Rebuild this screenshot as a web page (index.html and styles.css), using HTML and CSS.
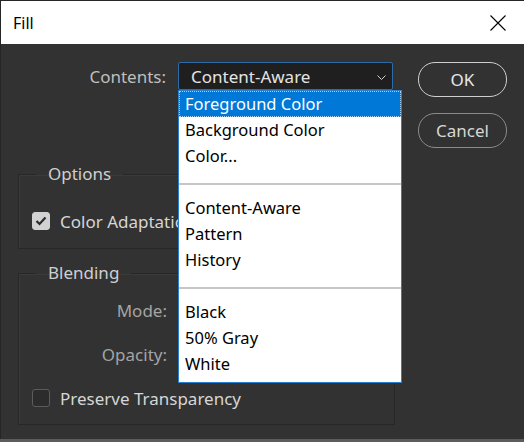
FILE: index.html
```html
<!DOCTYPE html>
<html lang="en">
<head>
  <meta charset="UTF-8" />
  <title>Fill</title>
  <link rel="stylesheet" href="styles.css">
</head>
<body>
  <div class="window">
    <div class="titlebar">
      <span class="title">Fill</span>
      <svg class="close" width="16" height="16" viewBox="0 0 16 16">
        <path d="M0.5 0.5 L15.5 15.5 M15.5 0.5 L0.5 15.5" stroke="#000" stroke-width="1.1" fill="none" />
      </svg>
    </div>

    <div class="dialog">
      <div class="main">
        <div class="contents-row">
          <label class="field-label">Contents:</label>
          <div class="select">
            <span>Content-Aware</span>
            <svg class="chevron" width="9" height="5" viewBox="0 0 9 5">
              <path d="M0.5 0.5 L4.5 4.5 L8.5 0.5" stroke="#cfcfcf" stroke-width="1" fill="none" />
            </svg>
          </div>

          <!-- open dropdown list -->
          <div class="dropdown">
            <div class="group">
              <div class="item selected">Foreground Color</div>
              <div class="item">Background Color</div>
              <div class="item">Color...</div>
            </div>
            <div class="separator"></div>
            <div class="group">
              <div class="item">Content-Aware</div>
              <div class="item">Pattern</div>
              <div class="item">History</div>
            </div>
            <div class="separator"></div>
            <div class="group last">
              <div class="item">Black</div>
              <div class="item">50% Gray</div>
              <div class="item">White</div>
            </div>
          </div>
        </div>

        <fieldset class="box options">
          <legend>Options</legend>
          <div class="check-row">
            <span class="checkbox checked">
              <svg width="12" height="10" viewBox="0 0 12 10">
                <path d="M1.5 5 L4.5 8 L10.5 1.5" stroke="#2b2b2b" stroke-width="2.2" fill="none" />
              </svg>
            </span>
            <span>Color Adaptation</span>
          </div>
        </fieldset>

        <fieldset class="box blending">
          <legend>Blending</legend>
          <div class="blend-row">
            <label class="field-label dim">Mode:</label>
          </div>
          <div class="blend-row">
            <label class="field-label dim">Opacity:</label>
          </div>
          <div class="check-row">
            <span class="checkbox"></span>
            <span>Preserve Transparency</span>
          </div>
        </fieldset>
      </div>

      <div class="buttons">
        <button class="btn primary">OK</button>
        <button class="btn">Cancel</button>
      </div>
    </div>
  </div>
</body>
</html>
```

FILE: styles.css
```css
body {
  margin: 0;
  padding: 0;
  background-color: #5f5b58;
  font-family: "Noto Sans", "Open Sans", sans-serif;
  font-size: 17px;
}

.window {
  height: 439px;
  display: flex;
  flex-direction: column;
  border-top: 1px solid #262626;
  border-left: 1px solid #262626;
  box-sizing: border-box;
  background-color: #323232;
}

.titlebar {
  height: 43px;
  flex-shrink: 0;
  display: flex;
  align-items: center;
  justify-content: space-between;
  padding: 0 18px 0 12px;
  background-color: #fff;
}

.title {
  font-size: 16px;
  color: #000;
}

.close {
  display: block;
}

.dialog {
  display: flex;
  gap: 23px;
  padding: 18px 0 0 17px;
}

.main {
  width: 377px;
}

.contents-row {
  position: relative;
  display: flex;
  align-items: center;
  gap: 12px;
  height: 28px;
}

.field-label {
  width: 148px;
  text-align: right;
  color: #bfbfbf;
}

.field-label.dim {
  color: #a4a4a4;
}

.select {
  width: 215px;
  height: 28px;
  box-sizing: border-box;
  display: flex;
  align-items: center;
  justify-content: space-between;
  padding: 0 6px 0 12px;
  background-color: #1f1f1f;
  border: 1px solid #2d6aa8;
  border-radius: 2px;
  color: #e4e4e4;
}

.chevron {
  display: block;
  margin-top: 2px;
}

.dropdown {
  position: absolute;
  top: 28px;
  left: 160px;
  width: 224px;
  box-sizing: border-box;
  background-color: #fff;
  border: 1px solid #2a7fcf;
  color: #000;
  font-size: 16.5px;
  z-index: 2;
}

.group {
  padding-bottom: 14px;
}

.group + .separator + .group {
  padding-top: 10px;
}

.group.last {
  padding-bottom: 5px;
}

.separator {
  height: 2px;
  background-color: #c6c6c6;
}

.item {
  height: 26px;
  line-height: 26px;
  padding-left: 6px;
}

.item.selected {
  background-color: #0078d7;
  color: #fff;
  outline: 1px dotted #a9d1f3;
  outline-offset: -1px;
}

.box {
  margin: 0;
  padding: 0 0 0 13px;
  border: 1px solid #272727;
  box-shadow: 1px 1px 0 #3a3a3a inset;
}

.box legend {
  margin-left: 4px;
  padding: 0 12px;
  line-height: 20px;
  color: #cfcfcf;
}

.options {
  margin-top: 74px;
  padding-top: 24px;
  padding-bottom: 14px;
}

.blending {
  margin-top: 14px;
  display: flex;
  flex-direction: column;
  gap: 18px;
  padding-top: 14px;
  padding-bottom: 13px;
}

.blending .field-label {
  margin-left: -13px;
}

.blend-row {
  height: 26px;
  display: flex;
  align-items: center;
}

.check-row {
  height: 26px;
  display: flex;
  align-items: center;
  gap: 10px;
  color: #d6d6d6;
}

.checkbox {
  width: 18px;
  height: 18px;
  box-sizing: border-box;
  border: 1px solid #5c5c5c;
  border-radius: 3px;
  background-color: #2c2c2c;
  display: flex;
  align-items: center;
  justify-content: center;
}

.checkbox.checked {
  background-color: #d2d2d2;
  border-color: #d2d2d2;
}

.buttons {
  display: flex;
  flex-direction: column;
  gap: 16px;
}

.btn {
  width: 89px;
  height: 35px;
  border: 1px solid #8a8a8a;
  border-radius: 17px;
  background-color: transparent;
  color: #d6d6d6;
  font-family: "Noto Sans", "Open Sans", sans-serif;
  font-size: 17px;
  padding: 0;
}

.btn.primary {
  border-color: #cfcfcf;
  color: #e8e8e8;
}
```
